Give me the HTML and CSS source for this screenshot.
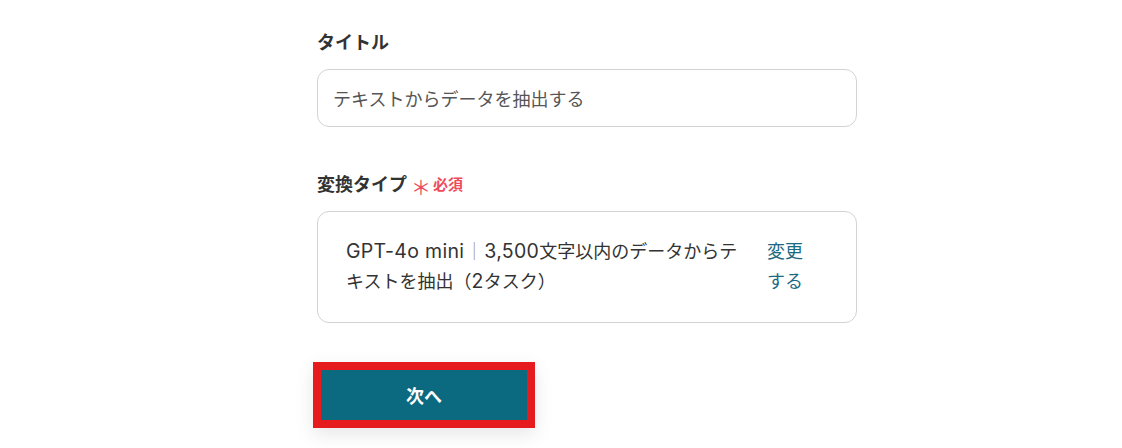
FILE: index.html
```html
<!DOCTYPE html>
<html lang="ja">
<head>
<meta charset="utf-8">
<link rel="stylesheet" href="styles.css">
</head>
<body>
<div class="form">
  <div class="label">タイトル</div>
  <div class="input">テキストからデータを抽出する</div>

  <div class="label label-second">変換タイプ<span class="ast">＊</span><span class="req">必須</span></div>
  <div class="select">
    <div class="select-text"><span class="en">GPT-4o mini</span><span class="bar">｜</span><span class="en">3,500</span>文字以内のデータからテキストを抽出（<span class="en">2</span>タスク）</div>
    <div class="select-link">変更する</div>
  </div>

  <div class="btn-wrap">
    <div class="btn">次へ</div>
  </div>
</div>
</body>
</html>
```
FILE: styles.css
```css
html, body {
  margin: 0;
  padding: 0;
  background: #ffffff;
}
body {
  width: 1122px;
  height: 448px;
  overflow: hidden;
  font-family: Inter, "Noto Sans CJK JP", sans-serif;
  color: #333333;
}
.form {
  width: 540px;
  margin-left: 317px;
  padding-top: 31px;
}
.label {
  font-size: 18px;
  font-weight: 700;
  line-height: 24px;
  height: 24px;
  margin-bottom: 14px;
  color: #333333;
  display: flex;
  align-items: center;
}
.label-second {
  margin-top: 46px;
}
.ast {
  color: #ec4b5b;
  font-size: 20px;
  font-weight: 400;
  margin-left: 4px;
  line-height: 24px;
  position: relative;
  top: 3px;
}
.req {
  color: #ec4b5b;
  font-size: 15px;
  font-weight: 700;
  margin-left: 2px;
}
.input {
  box-sizing: border-box;
  height: 58px;
  border: 1px solid #d3d3d3;
  border-radius: 12px;
  padding: 0 15px;
  display: flex;
  align-items: center;
  font-size: 18px;
  color: #555555;
}
.select {
  box-sizing: border-box;
  border: 1px solid #d3d3d3;
  border-radius: 12px;
  padding: 25px 53px 25px 28px;
  display: flex;
  font-size: 18px;
  line-height: 30px;
  color: #333333;
}
.select-text {
  flex: 1;
}
.en {
  font-size: 19.5px;
  letter-spacing: 0.3px;
  line-height: 20px;
}
.bar {
  color: #999999;
  padding: 0 1px;
}
.select-link {
  width: 36px;
  flex: none;
  margin-left: 22px;
  color: #1b6a82;
  word-break: break-all;
}
.btn-wrap {
  margin-top: 39px;
  margin-left: -4px;
  width: 206px;
  border: 8px solid #e61b1e;
  box-shadow: 0 6px 18px rgba(0, 0, 0, 0.10);
}
.btn {
  height: 50px;
  background: #0b6a80;
  color: #ffffff;
  font-size: 18px;
  font-weight: 700;
  display: flex;
  align-items: center;
  justify-content: center;
}
```
